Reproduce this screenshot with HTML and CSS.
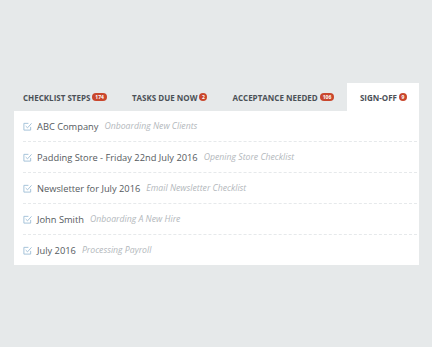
FILE: index.html
```html
<!DOCTYPE html>
<html lang="en">
<head>
    <meta charset="UTF-8">
    <title>Checklists</title>
    <link rel="stylesheet" href="styles.css">
</head>
<body>
    <div class="wrap">
        <div class="tabs">
            <div class="tab">Checklist Steps <span class="badge">174</span></div>
            <div class="tab">Tasks Due Now <span class="badge round">2</span></div>
            <div class="tab">Acceptance Needed <span class="badge">106</span></div>
            <div class="tab active">Sign-Off <span class="badge round">9</span></div>
        </div>
        <div class="panel">
            <div class="row">
                <svg class="check" viewBox="0 0 10 10"><path d="M8.5 5.5V9H1V1.5h5" fill="none" stroke="#9dbdd6" stroke-width="1"/><path d="M3 4.5l2 2L9.5 1.5" fill="none" stroke="#9dbdd6" stroke-width="1"/></svg>
                <span class="name">ABC Company</span>
                <span class="list">Onboarding New Clients</span>
            </div>
            <div class="row">
                <svg class="check" viewBox="0 0 10 10"><path d="M8.5 5.5V9H1V1.5h5" fill="none" stroke="#9dbdd6" stroke-width="1"/><path d="M3 4.5l2 2L9.5 1.5" fill="none" stroke="#9dbdd6" stroke-width="1"/></svg>
                <span class="name">Padding Store - Friday 22nd July 2016</span>
                <span class="list">Opening Store Checklist</span>
            </div>
            <div class="row">
                <svg class="check" viewBox="0 0 10 10"><path d="M8.5 5.5V9H1V1.5h5" fill="none" stroke="#9dbdd6" stroke-width="1"/><path d="M3 4.5l2 2L9.5 1.5" fill="none" stroke="#9dbdd6" stroke-width="1"/></svg>
                <span class="name">Newsletter for July 2016</span>
                <span class="list">Email Newsletter Checklist</span>
            </div>
            <div class="row">
                <svg class="check" viewBox="0 0 10 10"><path d="M8.5 5.5V9H1V1.5h5" fill="none" stroke="#9dbdd6" stroke-width="1"/><path d="M3 4.5l2 2L9.5 1.5" fill="none" stroke="#9dbdd6" stroke-width="1"/></svg>
                <span class="name">John Smith</span>
                <span class="list">Onboarding A New Hire</span>
            </div>
            <div class="row">
                <svg class="check" viewBox="0 0 10 10"><path d="M8.5 5.5V9H1V1.5h5" fill="none" stroke="#9dbdd6" stroke-width="1"/><path d="M3 4.5l2 2L9.5 1.5" fill="none" stroke="#9dbdd6" stroke-width="1"/></svg>
                <span class="name">July 2016</span>
                <span class="list">Processing Payroll</span>
            </div>
        </div>
    </div>
</body>
</html>
```

FILE: styles.css
```css
body {
    margin: 0;
    background-color: #e6e9ea;
    font-family: "Open Sans", Arial, sans-serif;
}
.wrap {
    padding: 83px 0 0 14px;
    width: 405px;
}
.tabs {
    display: flex;
    height: 28px;
}
.tab {
    display: flex;
    align-items: center;
    padding: 0 12px 0 13px;
    font-size: 8px;
    font-weight: 700;
    text-transform: uppercase;
    color: #4b5157;
    white-space: nowrap;
}
.tab:first-child {
    padding-left: 9px;
}
.tab.active {
    background: white;
    margin-left: auto;
}
.badge {
    display: inline-block;
    margin-left: 2px;
    background-color: #c9472d;
    color: white;
    font-size: 5px;
    line-height: 8px;
    height: 8px;
    padding: 0 3px;
    border-radius: 4px;
}
.badge.round {
    padding: 0;
    width: 8px;
    text-align: center;
}
.panel {
    background: white;
    padding: 0 2px 0 9px;
}
.row {
    display: flex;
    align-items: center;
    height: 30px;
    border-bottom: 1px dashed #e6e9eb;
}
.row:last-child {
    border-bottom: none;
}
.check {
    width: 9px;
    height: 9px;
    margin-right: 5px;
}
.name {
    font-size: 9.3px;
    color: #555a5e;
}
.list {
    margin-left: 6px;
    font-size: 8.7px;
    font-style: italic;
    color: #b3b8bc;
}
```
